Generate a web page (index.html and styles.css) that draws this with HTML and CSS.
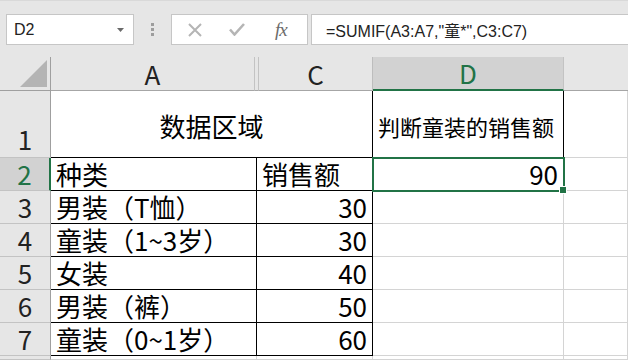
FILE: index.html
```html
<!DOCTYPE html>
<html lang="zh-CN">

<head>
    <meta charset="UTF-8">
    <title>SUMIF 童装销售额</title>
    <link rel="stylesheet" href="styles.css">
</head>

<body>
    <div class="toolbar">
        <div class="name-box">
            <span>D2</span>
            <svg class="caret" width="8" height="4" viewBox="0 0 8 4"><path d="M0 0h7L3.5 4z" fill="#6a6a6a"/></svg>
        </div>
        <div class="grip"><i></i><i></i><i></i></div>
        <div class="fx-buttons">
            <svg width="14" height="14" viewBox="0 0 14 14"><path d="M1 1l12 12M13 1L1 13" stroke="#b5b5b5" stroke-width="2" fill="none"/></svg>
            <svg width="16" height="13" viewBox="0 0 16 13"><path d="M1 6.5l4.5 5L15 1" stroke="#b5b5b5" stroke-width="2.6" fill="none"/></svg>
            <span class="fx">fx</span>
        </div>
        <div class="formula">=SUMIF(A3:A7,"童*",C3:C7)</div>
    </div>

    <div class="col-heads">
        <div class="corner"><svg width="27" height="27" viewBox="0 0 27 27"><path d="M27 0V27H0z" fill="#b4b4b4"/></svg></div>
        <div class="col-head col-a">A</div>
        <div class="col-head col-b"></div>
        <div class="col-head col-c">C</div>
        <div class="col-head col-d active">D</div>
        <div class="col-head col-e"></div>
    </div>

    <div class="sheet">
        <div class="row-head tall">1</div>
        <div class="cell title">数据区域</div>
        <div class="cell label-d">判断童装的销售额</div>
        <div class="cell"></div>

        <div class="row-head active">2</div>
        <div class="cell boxed">种类</div>
        <div class="cell boxed">销售额</div>
        <div class="cell num selected">90<span class="handle"></span></div>
        <div class="cell"></div>

        <div class="row-head">3</div>
        <div class="cell boxed">男装（T恤）</div>
        <div class="cell boxed num">30</div>
        <div class="cell"></div>
        <div class="cell"></div>

        <div class="row-head">4</div>
        <div class="cell boxed">童装（1~3岁）</div>
        <div class="cell boxed num">30</div>
        <div class="cell"></div>
        <div class="cell"></div>

        <div class="row-head">5</div>
        <div class="cell boxed">女装</div>
        <div class="cell boxed num">40</div>
        <div class="cell"></div>
        <div class="cell"></div>

        <div class="row-head">6</div>
        <div class="cell boxed">男装（裤）</div>
        <div class="cell boxed num">50</div>
        <div class="cell"></div>
        <div class="cell"></div>

        <div class="row-head">7</div>
        <div class="cell boxed">童装（0~1岁）</div>
        <div class="cell boxed num">60</div>
        <div class="cell"></div>
        <div class="cell"></div>

        <!-- row 8 only peeks in at the bottom edge -->
        <div class="row-head"></div>
        <div class="cell"></div>
        <div class="cell"></div>
        <div class="cell"></div>
        <div class="cell"></div>
    </div>
</body>

</html>
```

FILE: styles.css
```css
body {
    margin: 0;
    width: 628px;
    height: 360px;
    overflow: hidden;
    background: #ffffff;
    font-family: "Noto Sans CJK SC", sans-serif;
    color: #000;
}

/* formula bar */

.toolbar {
    height: 57px;
    box-sizing: border-box;
    padding: 13px 0 0 6px;
    background: #e6e6e6;
    border-top: 1px solid #d9d9d9;
    display: flex;
    align-items: flex-start;
}

.name-box,
.fx-buttons,
.formula {
    height: 31px;
    box-sizing: border-box;
    background: #fff;
    border: 1px solid #c6c6c6;
    display: flex;
    align-items: center;
}

.name-box {
    width: 128px;
    padding: 0 8px 0 7px;
    justify-content: space-between;
    font-family: "Liberation Sans", sans-serif;
    font-size: 16px;
    color: #222;
}

.grip {
    width: 37px;
    height: 31px;
    display: flex;
    flex-direction: column;
    align-items: center;
    justify-content: center;
    gap: 2px;
}

.grip i {
    width: 3px;
    height: 3px;
    background: #9d9d9d;
}

.fx-buttons {
    width: 137px;
    padding: 0 0 0 16px;
}

.fx-buttons svg:first-child {
    margin-right: 27px;
}

.fx-buttons svg:nth-child(2) {
    margin-right: 30px;
}

.fx {
    font-family: "Liberation Serif", serif;
    font-style: italic;
    font-size: 19px;
    color: #6b6b6b;
    letter-spacing: -1px;
}

.formula {
    margin-left: 3px;
    flex: 1;
    border-right: none;
    padding-left: 14px;
    font-family: "Liberation Sans", "Noto Sans CJK SC", sans-serif;
    font-size: 16px;
    color: #222;
}

/* column headings */

.col-heads {
    display: flex;
    height: 34px;
    background: #e6e6e6;
    font-size: 26px;
    color: #222;
}

.corner {
    width: 51px;
    box-sizing: border-box;
    border-right: 1px solid #9f9f9f;
    border-bottom: 1px solid #9f9f9f;
    display: flex;
    justify-content: flex-end;
    align-items: flex-end;
    padding: 0 3px 3px 0;
}

.col-head {
    box-sizing: border-box;
    border-right: 1px solid #c3c3c3;
    border-bottom: 1px solid #a6a6a6;
    display: flex;
    justify-content: center;
    align-items: center;
    line-height: 1;
}

.col-a { width: 204px; }
.col-b { width: 4px; }
.col-c { width: 114px; border-right-color: #bdbdbd; }
.col-d { width: 191px; }
.col-e { flex: 1; border-right: none; }

.col-head.active {
    background: #d2d2d2;
    color: #217346;
    border-bottom: 2px solid #217346;
}

/* cells */

.sheet {
    display: grid;
    grid-template-columns: 51px 206px 116px 191px 1fr;
    grid-template-rows: 67px repeat(6, 33px) 1fr;
    height: 269px;
    overflow: hidden;
}

.row-head {
    box-sizing: border-box;
    background: #e6e6e6;
    border-right: 1px solid #9f9f9f;
    border-bottom: 1px solid #c3c3c3;
    font-size: 26px;
    line-height: 32px;
    text-align: center;
    color: #222;
}

.row-head.tall {
    display: flex;
    align-items: flex-end;
    justify-content: center;
    padding-bottom: 2px;
}

.row-head.active {
    background: #d2d2d2;
    color: #217346;
    border-right: 2px solid #217346;
}

.cell {
    box-sizing: border-box;
    border-right: 1px solid #d4d4d4;
    border-bottom: 1px solid #d4d4d4;
    font-size: 26px;
    line-height: 32px;
    padding: 0 5px;
    white-space: nowrap;
}

.cell.title {
    grid-column: span 2;
    border-right-color: #000;
    border-bottom-color: #000;
    display: flex;
    justify-content: center;
    align-items: center;
    padding-top: 3px;
}

.cell.label-d {
    border-right-color: #000;
    border-bottom-color: #000;
    font-size: 22px;
    display: flex;
    align-items: center;
    padding-top: 4px;
}

.cell.boxed {
    border-right-color: #000;
    border-bottom-color: #000;
}

.cell.num {
    text-align: right;
}

.cell.selected {
    position: relative;
    outline: 2px solid #217346;
    outline-offset: -1px;
    z-index: 1;
}

.handle {
    position: absolute;
    right: -4px;
    bottom: -4px;
    width: 6px;
    height: 6px;
    background: #217346;
    border: 1px solid #fff;
}
```
